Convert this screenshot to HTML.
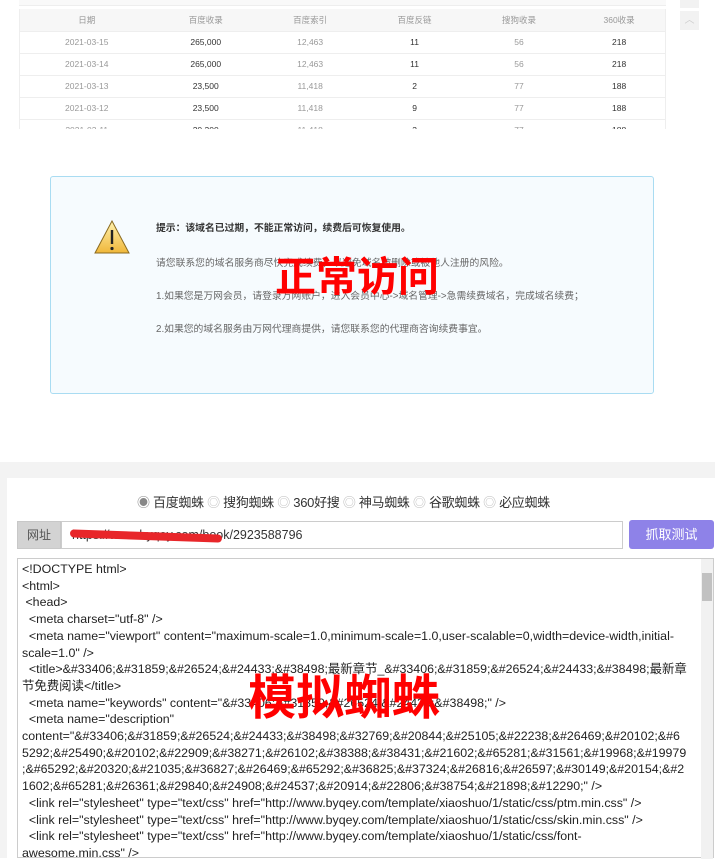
<!DOCTYPE html>
<html><head><meta charset="utf-8">
<style>
*{margin:0;padding:0;box-sizing:border-box}
body{width:715px;height:852px;overflow:hidden;background:#fff;font-family:"Liberation Sans","Noto Sans CJK SC",sans-serif;position:relative}
.abs{position:absolute}
table{border-collapse:collapse;font-size:8.5px;color:#999}
td{text-align:center;height:22px;border-bottom:1px solid #eee}
td.b{color:#333}
.alert{left:50px;top:176px;width:604px;height:218px;background:#f6fbfe;border:1px solid #a9dcf2;border-radius:3px}
.alert p{position:absolute;left:105px;font-size:9.8px;color:#666;white-space:nowrap}
.big{color:#f00;font-weight:bold;font-family:"Noto Sans CJK SC",sans-serif;white-space:nowrap}
.code{left:17px;top:558px;width:697px;height:300px;border:1px solid #ccc;background:#fff}
.code pre{position:absolute;left:4px;top:2px;font-family:"Liberation Sans","Noto Sans CJK SC",sans-serif;font-size:12.4px;line-height:16.7px;color:#222;letter-spacing:0}
</style></head><body>
<div class="abs" style="left:19px;top:0;width:647px;height:6px;background:#f9f9f9;border-bottom:1px solid #eee"></div>
<div class="abs" style="left:19px;top:9px;width:647px;height:120px;overflow:hidden;border-left:1px solid #eee;border-right:1px solid #eee">
<table style="width:647px">
<tr style="background:#f7f7f7"><td>日期</td><td>百度收录</td><td>百度索引</td><td>百度反链</td><td>搜狗收录</td><td>360收录</td></tr>
<tr><td>2021-03-15</td><td class="b">265,000</td><td>12,463</td><td class="b">11</td><td>56</td><td class="b">218</td></tr>
<tr><td>2021-03-14</td><td class="b">265,000</td><td>12,463</td><td class="b">11</td><td>56</td><td class="b">218</td></tr>
<tr><td>2021-03-13</td><td class="b">23,500</td><td>11,418</td><td class="b">2</td><td>77</td><td class="b">188</td></tr>
<tr><td>2021-03-12</td><td class="b">23,500</td><td>11,418</td><td class="b">9</td><td>77</td><td class="b">188</td></tr>
<tr><td>2021-03-11</td><td class="b">20,300</td><td>11,418</td><td class="b">3</td><td>77</td><td class="b">188</td></tr>
</table></div>
<div class="abs" style="left:680px;top:0;width:19px;height:8px;background:#f2f2f2"></div>
<div class="abs" style="left:680px;top:11px;width:19px;height:19px;background:#f2f2f2;color:#ccc;font-size:10px;text-align:center;line-height:19px">︿</div>

<div class="abs alert">
<svg class="abs" style="left:43px;top:43px" width="36" height="34" viewBox="0 0 36 34"><defs><linearGradient id="g" x1="0" y1="0" x2="0" y2="1"><stop offset="0" stop-color="#fff2b0"/><stop offset="1" stop-color="#f0b73a"/></linearGradient></defs><path d="M18 1 L35 33 L1 33 Z" fill="url(#g)" stroke="#8a6a20" stroke-width="1"/><rect x="16.8" y="10" width="2.4" height="14" fill="#222"/><circle cx="18" cy="28.5" r="1.6" fill="#222"/></svg>
<p style="top:43px;font-weight:bold;color:#333">提示：该域名已过期，不能正常访问，续费后可恢复使用。</p>
<p style="top:78px">请您联系您的域名服务商尽快完成续费，以避免域名被删除或被他人注册的风险。</p>
<p style="top:111px">1.如果您是万网会员，请登录万网账户，进入会员中心-&gt;域名管理-&gt;急需续费域名，完成域名续费；</p>
<p style="top:144px">2.如果您的域名服务由万网代理商提供，请您联系您的代理商咨询续费事宜。</p>
<div class="abs big" style="left:224px;top:70px;font-size:41px;line-height:52px">正常访问</div>
</div>

<div class="abs" style="left:0;top:462px;width:715px;height:16px;background:#f3f3f3"></div>
<div class="abs" style="left:0;top:478px;width:7px;height:380px;background:#f3f3f3"></div>
<div class="abs" style="left:137px;top:492px;font-size:13px;color:#333;white-space:nowrap;letter-spacing:-0.3px">
<span style="color:#888">◉</span> 百度蜘蛛 <span style="color:#bbb">◎</span> 搜狗蜘蛛 <span style="color:#bbb">◎</span> 360好搜 <span style="color:#bbb">◎</span> 神马蜘蛛 <span style="color:#bbb">◎</span> 谷歌蜘蛛 <span style="color:#bbb">◎</span> 必应蜘蛛</div>
<div class="abs" style="left:17px;top:521px;width:44px;height:28px;background:#d3d3d3;border:1px solid #c8c8c8;font-size:12px;color:#555;text-align:center;line-height:26px">网址</div>
<div class="abs" style="left:61px;top:521px;width:562px;height:28px;border:1px solid #ccc;font-size:12.5px;color:#333;line-height:26px;padding-left:10px">https://www.byqey.com/book/2923588796</div>
<div class="abs" style="left:70px;top:532px;width:152px;height:8px;background:#e8262a;border-radius:4px;transform:rotate(2deg)"></div>
<div class="abs" style="left:629px;top:520px;width:85px;height:29px;background:#8e82e8;border-radius:3px;color:#fff;font-size:13px;text-align:center;line-height:29px">抓取测试</div>

<div class="abs code">
<pre>&lt;!DOCTYPE html&gt;
&lt;html&gt;
 &lt;head&gt;
  &lt;meta charset="utf-8" /&gt;
  &lt;meta name="viewport" content="maximum-scale=1.0,minimum-scale=1.0,user-scalable=0,width=device-width,initial-
scale=1.0" /&gt;
  &lt;title&gt;&amp;#33406;&amp;#31859;&amp;#26524;&amp;#24433;&amp;#38498;最新章节_&amp;#33406;&amp;#31859;&amp;#26524;&amp;#24433;&amp;#38498;最新章
节免费阅读&lt;/title&gt;
  &lt;meta name="keywords" content="&amp;#33406;&amp;#31859;&amp;#26524;&amp;#24433;&amp;#38498;" /&gt;
  &lt;meta name="description"
content="&amp;#33406;&amp;#31859;&amp;#26524;&amp;#24433;&amp;#38498;&amp;#32769;&amp;#20844;&amp;#25105;&amp;#22238;&amp;#26469;&amp;#20102;&amp;#6
5292;&amp;#25490;&amp;#20102;&amp;#22909;&amp;#38271;&amp;#26102;&amp;#38388;&amp;#38431;&amp;#21602;&amp;#65281;&amp;#31561;&amp;#19968;&amp;#19979
;&amp;#65292;&amp;#20320;&amp;#21035;&amp;#36827;&amp;#26469;&amp;#65292;&amp;#36825;&amp;#37324;&amp;#26816;&amp;#26597;&amp;#30149;&amp;#20154;&amp;#2
1602;&amp;#65281;&amp;#26361;&amp;#29840;&amp;#24908;&amp;#24537;&amp;#20914;&amp;#22806;&amp;#38754;&amp;#21898;&amp;#12290;" /&gt;
  &lt;link rel="stylesheet" type="text/css" href="http://www.byqey.com/template/xiaoshuo/1/static/css/ptm.min.css" /&gt;
  &lt;link rel="stylesheet" type="text/css" href="http://www.byqey.com/template/xiaoshuo/1/static/css/skin.min.css" /&gt;
  &lt;link rel="stylesheet" type="text/css" href="http://www.byqey.com/template/xiaoshuo/1/static/css/font-
awesome.min.css" /&gt;</pre>
<div class="abs" style="right:0;top:0;width:12px;height:300px;background:#f1f1f1"></div>
<div class="abs" style="right:1px;top:14px;width:10px;height:28px;background:#c1c1c1"></div>
<div class="abs big" style="left:230px;top:104px;font-size:48px;line-height:60px">模拟蜘蛛</div>
</div>
</body></html>
